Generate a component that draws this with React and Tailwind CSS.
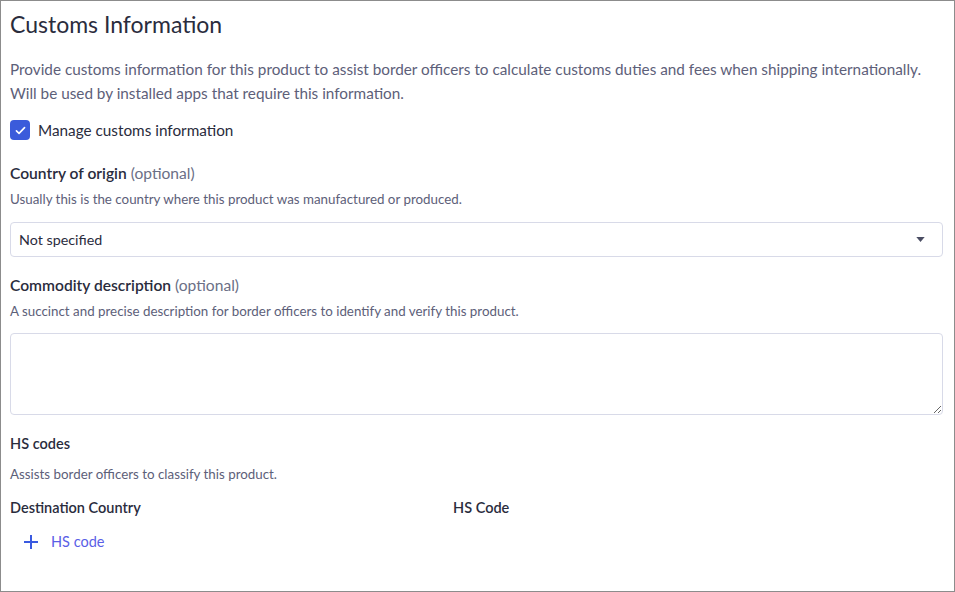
import { useState } from 'react'

function Label({ children, optional }) {
  return (
    <div className="text-[15.6px] leading-5 font-semibold text-[#2a2c3d]">
      {children}
      {optional && <span className="font-normal text-[#6b6f86]"> (optional)</span>}
    </div>
  )
}

function Help({ children }) {
  return <div className="mt-[6px] text-[13.35px] leading-5 text-[#5d6079]">{children}</div>
}

export default function App() {
  const [checked, setChecked] = useState(true)
  return (
    <div className="w-[955px] h-[592px] bg-white border border-[#8c8c8c] font-['Lato',sans-serif] text-[#2a2c3d]">
      <div className="pl-[9px] pr-[11px] pt-[9px]">
        <h1 className="text-[23px] leading-7 text-[#2a2c3d]">Customs Information</h1>
        <p className="mt-[19px] text-[15.3px] leading-6 text-[#5d6079]">
          Provide customs information for this product to assist border officers to calculate customs duties and fees when shipping internationally.
          <br />
          Will be used by installed apps that require this information.
        </p>
        <label className="mt-[15px] flex items-center gap-2 cursor-pointer">
          <button
            type="button"
            onClick={() => setChecked(!checked)}
            className={`w-5 h-5 rounded-[4px] flex items-center justify-center ${checked ? 'bg-[#3b5bdb]' : 'border border-[#c4c7d8] bg-white'}`}
          >
            {checked && (
              <svg className="w-[13px] h-[13px]" viewBox="0 0 16 16" fill="none" stroke="white" strokeWidth={2} strokeLinecap="round" strokeLinejoin="round">
                <path d="M3 8.5l3.2 3L13 4.5" />
              </svg>
            )}
          </button>
          <span className="text-[15.3px] leading-5">Manage customs information</span>
        </label>

        <div className="mt-[23px]">
          <Label optional>Country of origin</Label>
          <Help>Usually this is the country where this product was manufactured or produced.</Help>
          <div className="mt-[13px] h-[35px] border border-[#d8dae8] rounded-[4px] flex items-center justify-between pl-[8px] pr-[17px]">
            <span className="text-[14.3px] text-[#2a2c3d]">Not specified</span>
            <svg className="w-[9px] h-[5px]" viewBox="0 0 10 6" fill="#4a4d63">
              <path d="M0 0h10L5 6z" />
            </svg>
          </div>
        </div>

        <div className="mt-[18px]">
          <Label optional>Commodity description</Label>
          <Help>A succinct and precise description for border officers to identify and verify this product.</Help>
          <textarea className="mt-[12px] block w-full h-[82px] border border-[#d8dae8] rounded-[4px] outline-none" />
        </div>

        <div className="mt-[19px]">
          <div className="text-[14.5px] leading-5 font-semibold">HS codes</div>
          <div className="mt-[10px] text-[13.35px] leading-5 text-[#5d6079]">Assists border officers to classify this product.</div>
          <div className="mt-[14px] flex text-[14.5px] leading-5 font-semibold">
            <div className="w-[443px]">Destination Country</div>
            <div>HS Code</div>
          </div>
          <button type="button" className="mt-[14px] ml-[14px] flex items-center gap-[13px] text-[14.5px] leading-5 text-[#5a5ee6]">
            <svg className="w-[14px] h-[14px]" viewBox="0 0 14 14" stroke="#3a5ae0" strokeWidth={2}>
              <path d="M7 0v14M0 7h14" />
            </svg>
            HS code
          </button>
        </div>
      </div>
    </div>
  )
}
